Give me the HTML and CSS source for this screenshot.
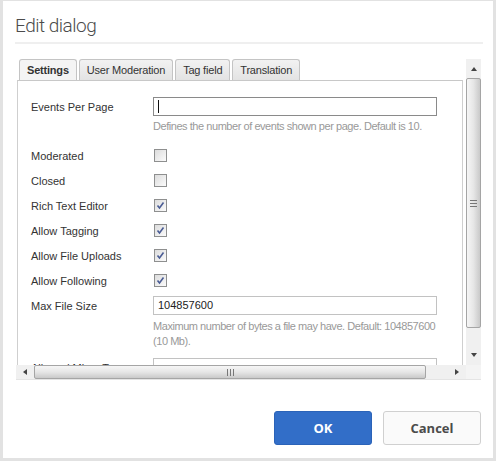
FILE: index.html
```html
<!DOCTYPE html>
<html lang="en">
<head>
<meta charset="UTF-8" />
<meta name="viewport" content="width=device-width, initial-scale=1" />
<title>Edit dialog</title>
<link rel="stylesheet" href="styles.css">
</head>
<body>

<div class="dialog">
  <div class="title">Edit dialog</div>
  <div class="rule"></div>

  <div class="scroller">
    <div class="view">
      <div class="tabs">
        <div class="tab active">Settings</div>
        <div class="tab">User Moderation</div>
        <div class="tab">Tag field</div>
        <div class="tab">Translation</div>
      </div>
      <div class="panel">
        <div class="row">
          <label>Events Per Page</label>
          <div class="field"><div class="input focus"><span class="caret"></span></div></div>
        </div>
        <div class="help">Defines the number of events shown per page. Default is 10.</div>

        <div class="row first-cb">
          <label>Moderated</label>
          <div class="field"><span class="cb"></span></div>
        </div>
        <div class="row">
          <label>Closed</label>
          <div class="field"><span class="cb"></span></div>
        </div>
        <div class="row">
          <label>Rich Text Editor</label>
          <div class="field"><span class="cb checked"><svg viewBox="0 0 11 11"><path d="M2.5 5.5 L4.5 8 L8.5 2.5" /></svg></span></div>
        </div>
        <div class="row">
          <label>Allow Tagging</label>
          <div class="field"><span class="cb checked"><svg viewBox="0 0 11 11"><path d="M2.5 5.5 L4.5 8 L8.5 2.5" /></svg></span></div>
        </div>
        <div class="row">
          <label>Allow File Uploads</label>
          <div class="field"><span class="cb checked"><svg viewBox="0 0 11 11"><path d="M2.5 5.5 L4.5 8 L8.5 2.5" /></svg></span></div>
        </div>
        <div class="row">
          <label>Allow Following</label>
          <div class="field"><span class="cb checked"><svg viewBox="0 0 11 11"><path d="M2.5 5.5 L4.5 8 L8.5 2.5" /></svg></span></div>
        </div>
        <div class="row">
          <label>Max File Size</label>
          <div class="field"><div class="input">104857600</div></div>
        </div>
        <div class="help gap">Maximum number of bytes a file may have. Default: 104857600 (10 Mb).</div>
        <div class="row next">
          <label>Allowed Mime Types</label>
          <div class="field"><div class="input"></div></div>
        </div>
      </div>
    </div>

    <div class="vbar">
      <div class="arrow"><span class="tri up"></span></div>
      <div class="vthumb"><span class="grip-h"></span></div>
      <div class="vtrack"></div>
      <div class="arrow down"><span class="tri dn"></span></div>
    </div>

    <div class="hbar">
      <div class="harrow"><span class="tri lt"></span></div>
      <div class="hthumb"><span class="grip-v"></span></div>
      <div class="htrack"></div>
      <div class="harrow"><span class="tri rt"></span></div>
    </div>
    <div class="corner"></div>
  </div>

  <div class="footer">
    <button class="btn primary">OK</button>
    <button class="btn">Cancel</button>
  </div>
</div>

</body>
</html>
```

FILE: styles.css
```css
body {
  margin: 0;
  background: #e2e2e2;
  font-family: "Liberation Sans", Arial, sans-serif;
}
.dialog {
  margin: 1px 3px 0 3px;
  height: 457px;
  background: #fff;
  display: flex;
  flex-direction: column;
}
.title {
  padding: 13px 12px 0;
  height: 28px;
  font-family: Roboto, Lato, sans-serif;
  font-weight: 300;
  font-size: 19px;
  letter-spacing: -0.5px;
  color: #4b4b4b;
}
.rule {
  margin: 0 10px 0 12px;
  border-top: 2px solid #efefef;
}

/* scroll area with hand drawn scrollbars */
.scroller {
  margin: 15px 0 0 13px;
  display: grid;
  grid-template-columns: 450px 15px;
  grid-template-rows: 306px 15px;
  width: 465px;
}
.view {
  overflow: hidden;
  font-size: 11px;
  color: #333;
}
.tabs {
  display: flex;
  gap: 2px;
  padding-left: 3px;
  height: 21px;
}
.tab {
  padding: 0 7px;
  line-height: 20px;
  border: 1px solid #c4c4c4;
  border-bottom: none;
  border-radius: 3px 3px 0 0;
  background: linear-gradient(#f2f2f2, #e3e3e3);
  color: #333;
  letter-spacing: -0.2px;
}
.tab.active {
  font-weight: bold;
  background: #f4f4f4;
}
.panel {
  margin-left: 1px;
  width: 446px;
  height: 300px;
  border: 1px solid #cfcfcf;
  border-bottom: none;
  border-top-color: #c8c8c8;
  padding: 13px 0 0 13px;
  box-sizing: border-box;
}
.row {
  display: flex;
  align-items: center;
  height: 25px;
}
.row label {
  width: 122px;
}
.field {
  width: 284px;
  display: flex;
}
.input {
  box-sizing: border-box;
  width: 284px;
  height: 19px;
  border: 1px solid #c2c2c2;
  padding: 0 4px;
  line-height: 17px;
  color: #222;
}
.input.focus {
  border-color: #8a8a8a;
}
.caret {
  display: inline-block;
  width: 1px;
  height: 13px;
  margin-top: 2px;
  background: #111;
}
.help {
  margin-left: 122px;
  width: 286px;
  line-height: 15px;
  color: #999;
  letter-spacing: -0.45px;
}
.help.gap {
  margin-top: 1px;
}
.first-cb {
  margin-top: 9px;
}
.next {
  margin-top: 6px;
}
.cb {
  box-sizing: border-box;
  width: 13px;
  height: 13px;
  margin-left: 1px;
  border: 1px solid #8e8f8f;
  background: linear-gradient(135deg, #dcdcdc, #fbfbfb);
  display: flex;
}
.cb svg {
  width: 11px;
  height: 11px;
}
.cb svg path {
  fill: none;
  stroke: #4a5c94;
  stroke-width: 1.6;
}

.vbar {
  display: flex;
  flex-direction: column;
  background: #f0f0f0;
}
.arrow {
  height: 19px;
  display: flex;
  align-items: center;
  justify-content: center;
}
.arrow.down {
  height: 20px;
}
.vthumb {
  height: 250px;
  box-sizing: border-box;
  border: 1px solid #a5a5a5;
  border-radius: 2px;
  background: linear-gradient(90deg, #f6f6f6, #e6e6e6 50%, #c9c9c9);
  display: flex;
  align-items: center;
  justify-content: center;
}
.vtrack {
  flex: 1;
}
.grip-h {
  width: 7px;
  height: 7px;
  background: repeating-linear-gradient(#777 0 1px, transparent 1px 3px);
}

.hbar {
  display: flex;
  background: #f0f0f0;
  border-bottom: 1px solid #e4e4e4;
}
.harrow {
  width: 18px;
  display: flex;
  align-items: center;
  justify-content: center;
}
.hthumb {
  width: 392px;
  box-sizing: border-box;
  border: 1px solid #a5a5a5;
  border-radius: 2px;
  background: linear-gradient(#f6f6f6, #e6e6e6 50%, #c9c9c9);
  display: flex;
  align-items: center;
  justify-content: center;
}
.htrack {
  flex: 1;
}
.grip-v {
  width: 7px;
  height: 7px;
  background: repeating-linear-gradient(90deg, #777 0 1px, transparent 1px 3px);
}
.corner {
  background: #f4f4f4;
  border-bottom: 1px solid #e4e4e4;
}
.tri {
  width: 0;
  height: 0;
  border: 3px solid transparent;
}
.tri.up { border-bottom: 4px solid #444; border-top: none; }
.tri.dn { border-top: 4px solid #444; border-bottom: none; }
.tri.lt { border-right: 4px solid #444; border-left: none; }
.tri.rt { border-left: 4px solid #444; border-right: none; }

.footer {
  display: flex;
  justify-content: flex-end;
  gap: 11px;
  padding: 31px 12px 0 0;
}
.btn {
  width: 98px;
  height: 34px;
  border: 1px solid #d0d0d0;
  border-radius: 3px;
  background: #fafafa;
  color: #4b4b4b;
  font-family: "Open Sans", sans-serif;
  font-weight: bold;
  font-size: 13px;
}
.btn.primary {
  background: #326ec8;
  border-color: #2b63b8;
  color: #fff;
}
```
